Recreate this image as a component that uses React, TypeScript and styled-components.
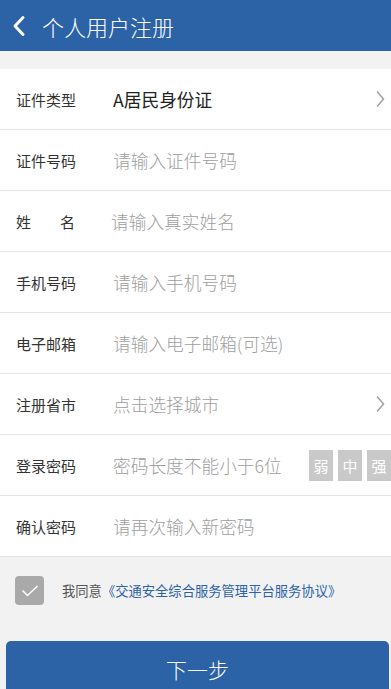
import React from 'react'
import styled, { createGlobalStyle } from 'styled-components'

const GlobalStyle = createGlobalStyle`
  html, body {
    margin: 0;
    padding: 0;
    background: #f2f2f2;
    font-family: 'Noto Sans CJK SC', 'Noto Sans', sans-serif;
  }
`

const BLUE = '#2c63a7'

const Page = styled.div`
  width: 391px;
  height: 689px;
  overflow: hidden;
  background: #f2f2f2;
  display: flex;
  flex-direction: column;

  & > * {
    flex-shrink: 0;
  }
`

const Header = styled.div`
  height: 51px;
  background: ${BLUE};
  display: flex;
  align-items: center;
  padding-left: 11px;
  box-sizing: border-box;
  color: #fff;
`

const Title = styled.div`
  font-size: 22px;
  margin-left: 15px;
  font-weight: 300;
`

const Form = styled.div`
  margin-top: 18px;
  background: #fff;
  border-bottom: 1px solid #e2e4e3;
`

const Row = styled.div<{ $last?: boolean }>`
  height: 60px;
  display: flex;
  align-items: center;
  border-bottom: ${(p) => (p.$last ? 'none' : '1px solid #e6e6e6')};
  padding-left: 16px;
`

const Label = styled.div<{ $spread?: boolean }>`
  width: 97px;
  flex-shrink: 0;
  font-size: 15px;
  color: #333;
  ${(p) => (p.$spread ? 'letter-spacing: 29px; width: 95px;' : '')}
`

const Value = styled.div<{ $placeholder?: boolean }>`
  flex: 1;
  font-size: 17.7px;
  font-weight: ${(p) => (p.$placeholder ? 300 : 400)};
  color: ${(p) => (p.$placeholder ? '#9e9e9e' : '#222')};
`

const Chevron = styled.div`
  display: flex;
  padding-right: 6px;
`

const Strength = styled.div`
  display: flex;
  gap: 5px;
  align-self: center;
`

const StrengthBox = styled.div`
  width: 24px;
  height: 31px;
  background: #c9c9c9;
  color: #fff;
  font-size: 15px;
  display: flex;
  align-items: center;
  justify-content: center;
`

const Agree = styled.div`
  display: flex;
  align-items: center;
  padding: 19px 15px 0;
  height: 29px;
`

const Check = styled.div`
  width: 29px;
  height: 29px;
  border-radius: 4px;
  background: #a9a9a9;
  display: flex;
  align-items: center;
  justify-content: center;
  margin-right: 18px;
`

const AgreeText = styled.div`
  font-size: 13.3px;
  color: #555;
`

const Link = styled.span`
  color: #2c63a7;
`

const Button = styled.div`
  margin: 36px 2px 0 6px;
  height: 60px;
  border-radius: 5px 5px 0 0;
  background: ${BLUE};
  color: #fff;
  font-size: 21px;
  font-weight: 300;
  display: flex;
  justify-content: center;
  padding-top: 13px;
  box-sizing: border-box;
`

const ArrowRight = () => (
  <svg width="10" height="18" viewBox="0 0 10 18">
    <path d="M2 1.5 L8.5 9 L2 16.5" fill="none" stroke="#a0a0a0" strokeWidth="1.5" />
  </svg>
)

const rows: { label: string; value: string; placeholder?: boolean; arrow?: boolean; strength?: boolean; spread?: boolean }[] = [
  { label: '证件类型', value: 'A居民身份证', arrow: true },
  { label: '证件号码', value: '请输入证件号码', placeholder: true },
  { label: '姓名', value: '请输入真实姓名', placeholder: true, spread: true },
  { label: '手机号码', value: '请输入手机号码', placeholder: true },
  { label: '电子邮箱', value: '请输入电子邮箱(可选)', placeholder: true },
  { label: '注册省市', value: '点击选择城市', placeholder: true, arrow: true },
  { label: '登录密码', value: '密码长度不能小于6位', placeholder: true, strength: true },
  { label: '确认密码', value: '请再次输入新密码', placeholder: true },
]

export default function App() {
  return (
    <Page>
      <GlobalStyle />
      <Header>
        <svg width="16" height="22" viewBox="0 0 16 22">
          <path d="M12 2.5 L4 11 L12 19.5" fill="none" stroke="#fff" strokeWidth="3" strokeLinecap="round" strokeLinejoin="round" />
        </svg>
        <Title>个人用户注册</Title>
      </Header>
      <Form>
        {rows.map((r, i) => (
          <Row key={r.label} $last={i === rows.length - 1}>
            <Label $spread={r.spread}>{r.label}</Label>
            <Value $placeholder={r.placeholder}>{r.value}</Value>
            {r.arrow && (
              <Chevron>
                <ArrowRight />
              </Chevron>
            )}
            {r.strength && (
              <Strength>
                <StrengthBox>弱</StrengthBox>
                <StrengthBox>中</StrengthBox>
                <StrengthBox>强</StrengthBox>
              </Strength>
            )}
          </Row>
        ))}
      </Form>
      <Agree>
        <Check>
          <svg width="18" height="12" viewBox="0 0 18 12">
            <path d="M1.5 5.5 L6.5 10.5 L16.5 1" fill="none" stroke="#fff" strokeWidth="1.6" />
          </svg>
        </Check>
        <AgreeText>
          我同意<Link>《交通安全综合服务管理平台服务协议》</Link>
        </AgreeText>
      </Agree>
      <Button>下一步</Button>
    </Page>
  )
}
